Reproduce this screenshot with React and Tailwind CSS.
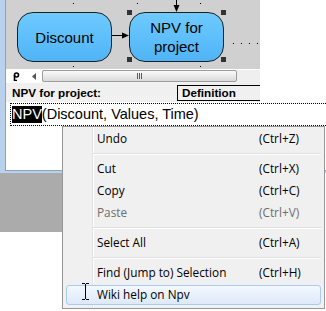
import clsx from 'clsx';

const menuItems = [
  { label: 'Undo', keys: '(Ctrl+Z)' },
  'sep',
  { label: 'Cut', keys: '(Ctrl+X)' },
  { label: 'Copy', keys: '(Ctrl+C)' },
  { label: 'Paste', keys: '(Ctrl+V)', disabled: true },
  'sep',
  { label: 'Select All', keys: '(Ctrl+A)' },
  'sep',
  { label: 'Find (Jump to) Selection', keys: '(Ctrl+H)' },
  { label: 'Wiki help on Npv', active: true },
];

function Diagram() {
  return (
    <div className="relative h-[69px] w-[254px] bg-[#d0d0d0] font-['Liberation_Sans',Arial,sans-serif]">
      <svg className="absolute inset-0" width="254" height="69">
        {/* grid dots */}
        {[67, 131, 194].map((x) => (
          <rect key={'t' + x} x={x} y={3} width={1} height={1} fill="#000" />
        ))}
        {[67, 194].map((x) => (
          <rect key={'b' + x} x={x} y={66} width={1} height={1} fill="#000" />
        ))}
        {[227, 235, 243, 251].map((x) => (
          <rect key={'r' + x} x={x} y={43} width={1} height={1} fill="#000" />
        ))}
        {/* arrow into NPV from above */}
        <line x1="170.5" y1="0" x2="170.5" y2="6" stroke="#000" strokeWidth="1" />
        <path d="M167.5 5 L173.5 5 L170.5 12 Z" fill="#000" />
        {/* Discount -> NPV */}
        <line x1="106" y1="35.5" x2="117" y2="35.5" stroke="#000" strokeWidth="1" />
        <path d="M116 32.5 L123 35.5 L116 38.5 Z" fill="#000" />
      </svg>

      {/* nodes */}
      <div className="absolute left-[11px] top-[12px] flex h-[50px] w-[95px] items-center justify-center rounded-[16px] border border-[#1e1e1e] bg-linear-to-b from-[#6ecaff] to-[#4fb4f7] text-[15px] leading-[19px] text-black">
        Discount
      </div>
      <div className="absolute left-[123px] top-[12px] flex h-[50px] w-[95px] items-center justify-center rounded-[16px] border border-[#1e1e1e] bg-linear-to-b from-[#6ecaff] to-[#4fb4f7] text-center text-[15px] leading-[19px] text-black">
        NPV for
        <br />
        project
      </div>

      {/* selection handles */}
      <div className="absolute left-[121px] top-[10px] h-[5px] w-[5px] bg-[#333]" />
      <div className="absolute left-[215px] top-[10px] h-[5px] w-[5px] bg-[#333]" />
      <div className="absolute left-[121px] top-[57px] h-[5px] w-[5px] bg-[#333]" />
      <div className="absolute left-[215px] top-[57px] h-[5px] w-[5px] bg-[#333]" />
    </div>
  );
}

function ScrollRow() {
  return (
    <div className="flex h-[14px] w-[254px] border-t border-white bg-[#f2f2f2]">
      <div className="flex w-[20px] items-center justify-center bg-white">
        <svg width="7" height="9" viewBox="0 0 7 9">
          <circle cx="3.5" cy="3" r="2" fill="none" stroke="#000" strokeWidth="1.6" />
          <path d="M1.5 3 V8.5 H4" fill="none" stroke="#000" strokeWidth="1.6" />
        </svg>
      </div>
      <div className="flex w-[16px] items-center justify-center bg-white">
        <svg width="4" height="7" viewBox="0 0 4 7">
          <path d="M4 0 L0 3.5 L4 7 Z" fill="#555" />
        </svg>
      </div>
      <div className="flex h-[12px] w-[195px] items-center justify-center gap-[1px] rounded-[2px] border border-[#9c9c9c] bg-linear-to-b from-[#fbfbfb] to-[#dadada]">
        <div className="h-[6px] w-[1px] bg-[#5a5a5a]" />
        <div className="h-[6px] w-[1px] bg-[#5a5a5a]" />
        <div className="h-[6px] w-[1px] bg-[#5a5a5a]" />
      </div>
      <div className="flex-1 bg-[#efefef]" />
    </div>
  );
}

function LabelRow() {
  return (
    <div className="flex h-[19px] w-[254px] items-center bg-[#f0f0f0] font-['Liberation_Sans',Arial,sans-serif] text-[11.7px] font-bold text-black">
      <div className="w-[171px] pl-[6px]">NPV for project:</div>
      <div className="flex h-[16px] flex-1 items-center border-y border-l border-black pl-[4px]">
        Definition
      </div>
    </div>
  );
}

function ContextMenu() {
  return (
    <div className="absolute left-[62px] top-[126px] w-[263px] border border-[#979797] bg-[linear-gradient(to_right,#f0f0f0_29px,#e2e3e3_29px,#e2e3e3_30px,#ffffff_30px,#ffffff_31px,#f0f0f0_31px)] px-[2px] pb-[2px] pt-[1px] font-['Open_Sans',Arial,sans-serif] text-[11.8px] text-black">
      {menuItems.map((item, i) =>
        item === 'sep' ? (
          <div key={i} className="flex h-[8px] flex-col justify-center pl-[28px] pr-[1px]">
            <div className="h-[1px] bg-[#e0e0e0]" />
            <div className="h-[1px] bg-white" />
          </div>
        ) : (
          <div key={i} className="h-[22px] p-[1px]">
            <div
              className={clsx(
                'flex h-[20px] items-center rounded-[3px] border pl-[30px]',
                item.active
                  ? 'border-[#a9cbf1] bg-linear-to-b from-[#f3f8fe] to-[#dde9f9]'
                  : 'border-transparent',
                item.disabled && 'text-[#6d6d6d]'
              )}
            >
              <span className="w-[162px] whitespace-nowrap">{item.label}</span>
              {item.keys && <span className="whitespace-nowrap">{item.keys}</span>}
            </div>
          </div>
        )
      )}
    </div>
  );
}

export default function App() {
  return (
    <div className="relative h-[311px] w-[326px] overflow-hidden bg-white">
      {/* window */}
      <div className="flex flex-col bg-[#b9d1ea] pb-[2px] pl-[5px]">
        <div className="flex flex-col border-b border-l border-[#8ba3bd] bg-white">
          <div className="flex">
            <div className="flex flex-col">
              <Diagram />
              <ScrollRow />
              <LabelRow />
            </div>
            <div className="flex-1 bg-white" />
          </div>
          {/* expression editor */}
          <div className="h-[68px] bg-white pl-[4px] pt-[1px]">
            <div className="flex h-[23px] w-[340px] items-center border border-dotted border-black pl-[1px] font-['Liberation_Sans',Arial,sans-serif] text-[14.5px] leading-[17px] text-black">
              <span className="bg-black text-white">NPV</span>
              <span>(Discount, Values, Time)</span>
            </div>
          </div>
        </div>
      </div>
      {/* desktop behind */}
      <div className="h-[59px] w-[62px] bg-[#ababab]" />

      <ContextMenu />

      {/* I-beam cursor */}
      <svg className="absolute left-[82px] top-[283px]" width="7" height="17" viewBox="0 0 7 17">
        <path d="M0 0.5h3M4 0.5h3M3.5 1v15M0 16.5h3M4 16.5h3" stroke="#000" strokeWidth="1" fill="none" />
      </svg>
    </div>
  );
}
